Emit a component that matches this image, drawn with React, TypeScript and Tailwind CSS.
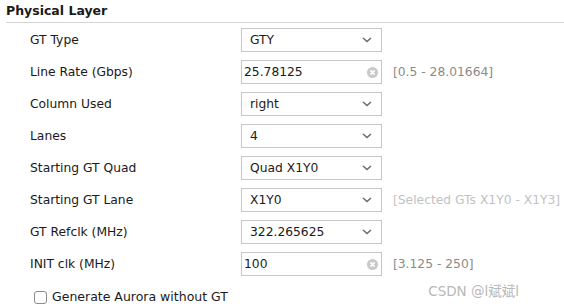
const font = { fontFamily: '"DejaVu Sans", "Noto Sans CJK SC", sans-serif' };

type Row = {
  label: string;
  kind: "select" | "input";
  value: string;
  note?: string;
  faint?: boolean;
};

const rows: Row[] = [
  { label: "GT Type", kind: "select", value: "GTY" },
  { label: "Line Rate (Gbps)", kind: "input", value: "25.78125", note: "[0.5 - 28.01664]" },
  { label: "Column Used", kind: "select", value: "right" },
  { label: "Lanes", kind: "select", value: "4" },
  { label: "Starting GT Quad", kind: "select", value: "Quad X1Y0" },
  { label: "Starting GT Lane", kind: "select", value: "X1Y0", note: "[Selected GTs X1Y0 - X1Y3]", faint: true },
  { label: "GT Refclk (MHz)", kind: "select", value: "322.265625" },
  { label: "INIT clk (MHz)", kind: "input", value: "100", note: "[3.125 - 250]" },
];

const Chevron = () => (
  <svg width="10" height="6" viewBox="0 0 10 6" className="shrink-0">
    <path d="M1 1 L5 4.5 L9 1" fill="none" stroke="#6b6b6b" strokeWidth="1.6" />
  </svg>
);

const ClearIcon = () => (
  <svg width="11" height="11" viewBox="0 0 11 11" className="shrink-0">
    <circle cx="5.5" cy="5.5" r="5.5" fill="#c9c9c9" />
    <path d="M3.4 3.4 L7.6 7.6 M7.6 3.4 L3.4 7.6" stroke="#fff" strokeWidth="1.5" />
  </svg>
);

const Field = ({ row }: { row: Row }) => {
  if (row.kind === "select") {
    return (
      <div className="flex h-[24px] w-[141px] items-center justify-between border border-[#c6c6c6] bg-white pl-[8px] pr-[9px] text-[12.3px] text-[#1a1a1a]">
        <span>{row.value}</span>
        <Chevron />
      </div>
    );
  }
  return (
    <div className="flex h-[24px] w-[141px] items-center justify-between border border-[#c6c6c6] bg-white pl-[2px] pr-[3px] text-[12.3px] text-[#1a1a1a]">
      <span>{row.value}</span>
      <ClearIcon />
    </div>
  );
};

const App = () => {
  return (
    <div className="relative h-[308px] w-[564px] overflow-hidden bg-white" style={font}>
      <div className="pl-[6px] pt-[3px]">
        <div className="text-[12.5px] font-bold leading-[16px] text-[#1a1a1a]">Physical Layer</div>
        <div className="mt-[3px] h-px bg-[#d4d4d4]" />
      </div>

      <div className="mt-[5px] flex flex-col gap-[8px] pl-[30px]">
        {rows.map((row) => (
          <div key={row.label} className="flex h-[24px] items-center">
            <div className="w-[211px] text-[12.3px] text-[#1a1a1a]">{row.label}</div>
            <Field row={row} />
            {row.note && (
              <div className={`ml-[11px] text-[12.3px] ${row.faint ? "text-[#c2c2c2]" : "text-[#8a8a8a]"}`}>
                {row.note}
              </div>
            )}
          </div>
        ))}
      </div>

      <div className="mt-[12px] flex items-center pl-[34px]">
        <div className="h-[13px] w-[13px] rounded-[3px] border border-[#8a8a8a] bg-white" />
        <span className="ml-[5px] text-[12.5px] text-[#1a1a1a]">Generate Aurora without GT</span>
      </div>

      <div className="absolute right-[45px] top-[281px] text-[13.5px] text-[#b8b8b8]">CSDN @l斌斌l</div>
    </div>
  );
};

export default App;
